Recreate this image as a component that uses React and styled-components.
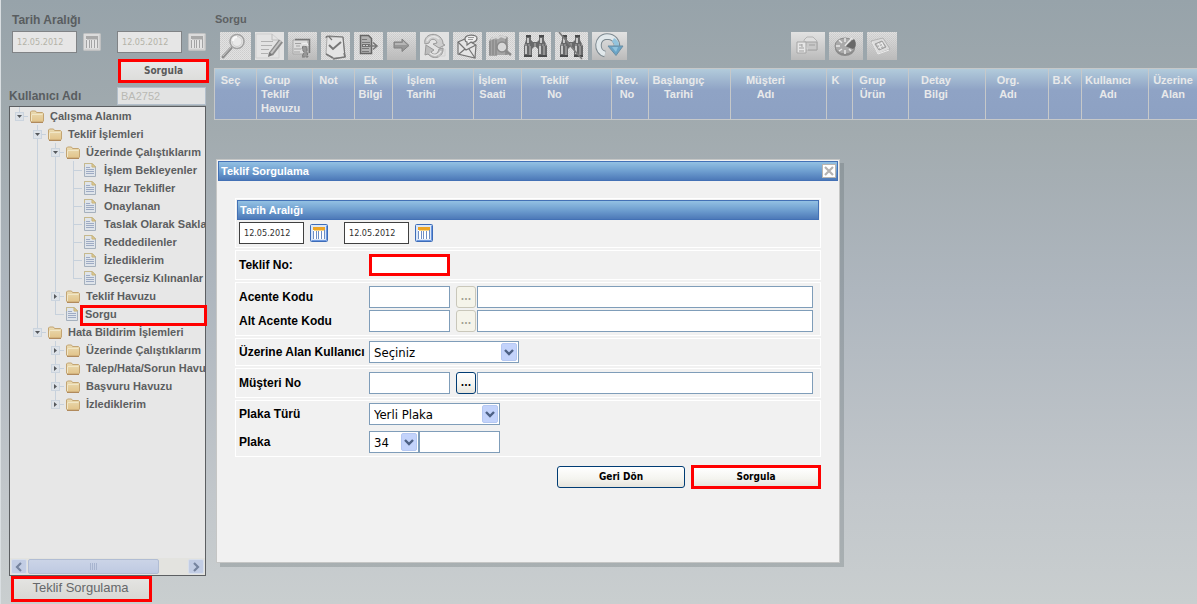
import { Fragment, useState } from 'react';
import styled, { createGlobalStyle, css } from 'styled-components';

const GlobalStyle = createGlobalStyle`
  * {
    box-sizing: border-box;
  }

  body {
    margin: 0;
    font-family: 'Liberation Sans', Arial, sans-serif;
    font-size: 11px;
    color: #5e6062;
  }

  button,
  input,
  select {
    margin: 0;
    font-family: 'DejaVu Sans Condensed', 'DejaVu Sans', Tahoma, sans-serif;
  }
`;

const Page = styled.div`
  display: flex;
  min-height: 100vh;
  position: relative;
  overflow: hidden;
  border-left: 1px solid #d9dee1;
  background: linear-gradient(
    #97a3aa 0%,
    #a2abaf 22%,
    #aeb6be 48%,
    #c2c7cb 82%,
    #c9cecf 100%
  );
`;

const Sidebar = styled.aside`
  display: flex;
  flex-direction: column;
  flex: none;
  width: 213px;
  padding: 11px 8px 2px 8px;
`;

const Main = styled.main`
  flex: 1;
  min-width: 0;
  padding-top: 10px;
`;

const SideLabel = styled.label`
  font-size: 12px;
  line-height: 18px;
  font-weight: bold;
  color: #595d60;
`;

const SideTitle = styled.div`
  padding-left: 3px;
  margin-bottom: 2px;
  font-size: 12px;
  line-height: 18px;
  font-weight: bold;
  color: #595d60;
`;

const DateRow = styled.div`
  display: flex;
  align-items: center;
  padding-left: ${(p) => (p.$dim ? '3px' : '2px')};
`;

const DateInput = styled.input`
  width: 65px;
  height: 22px;
  padding: 0 4px;
  border: 1px solid ${(p) => (p.$dim ? '#808386' : '#404040')};
  border-radius: 0;
  background: ${(p) => (p.$dim ? '#e6e6e6' : '#fff')};
  color: ${(p) => (p.$dim ? '#b4b3a8' : '#303030')};
  font-size: 9px;
`;

const IconButton = styled.button`
  display: flex;
  padding: 0;
  border: 0;
  background: none;
  cursor: pointer;
  margin: 0 ${(p) => (p.$gap ? '16px' : '0')} 0 6px;
`;

const marked = css`
  border: 3px solid #f00;
  border-radius: 0;
`;

const Button = styled.button`
  width: ${(p) => p.$width}px;
  height: 22px;
  padding: 0 0 1px;
  border: 1px solid #003c74;
  border-radius: 3px;
  background: linear-gradient(#fff, #f4f4ef 60%, #e6e4dc);
  color: #000;
  font-size: 10px;
  font-weight: bold;
  cursor: pointer;
  ${(p) => p.$marked && marked}
  ${(p) => p.$marked && 'height: 24px;'}

  &:disabled {
    border-color: #c9c7ba;
    background: #f5f4ea;
    color: #a1a192;
    cursor: default;
  }
`;

const SideButton = styled(Button)`
  align-self: flex-end;
  margin: 6px -3px 4px 0;
  background: linear-gradient(#e8e8e8, #dddddb);
  color: #5a5a5a;
`;

const UserRow = styled.div`
  display: flex;
  align-items: center;
  justify-content: space-between;
  margin-bottom: 1px;
`;

const UserInput = styled.input`
  width: 89px;
  height: 18px;
  padding: 0 3px;
  border: 1px solid #b3bfcb;
  background: #e2e3e3;
  color: #b9b9b4;
  font-family: 'Liberation Sans', Arial, sans-serif;
  font-size: 11px;
`;

const Tree = styled.div`
  display: flex;
  flex-direction: column;
  flex: 1;
  border: 1px solid #5c5f62;
  background: #e7e7e7;
`;

const TreeRows = styled.ul`
  flex: 1;
  margin: 0;
  padding: 0;
  list-style: none;
`;

const TreeRow = styled.li`
  display: flex;
  height: 18px;
`;

const TreeIcon = styled.span`
  display: flex;
  flex: none;
  align-items: center;
  justify-content: center;
  width: ${(p) => (p.$leaf ? '16px' : '18px')};
`;

const TreeLink = styled.a`
  flex: 1;
  min-width: 0;
  padding-left: ${(p) => (p.$leaf ? '6px' : '4px')};
  overflow: hidden;
  white-space: nowrap;
  line-height: 18px;
  font-size: 11px;
  font-weight: bold;
  color: #5c5e60;
  text-decoration: none;
  ${(p) =>
    p.$marked &&
    css`
      height: 21px;
      margin-right: -2px;
      padding-left: 2px;
      border: 3px solid #f00;
      line-height: 12px;
      background: #e7e7e7;
      z-index: 1;
    `}
`;

const ScrollBar = styled.div`
  display: flex;
  height: 17px;
  padding: 1px;
  background: #e3e3df;
`;

const ScrollButton = styled.button`
  display: flex;
  align-items: center;
  justify-content: center;
  width: 16px;
  padding: 0;
  border: 1px solid #d8dfeb;
  border-radius: 2px;
  background: #c2cde4;
`;

const ScrollThumb = styled.div`
  display: flex;
  align-items: center;
  justify-content: center;
  width: 68%;
  margin: 0 auto 0 1px;
  border: 1px solid #b1bdd4;
  border-radius: 2px;
  background: linear-gradient(#cbd4e7, #bfcae2);
`;

const TaskButton = styled.button`
  ${marked}
  align-self: flex-start;
  width: 141px;
  height: 26px;
  margin-left: 2px;
  padding: 0 2px 3px 0;
  background: linear-gradient(#e4e4e2, #d8d8d4);
  color: #66686a;
  font-family: 'Liberation Sans', Arial, sans-serif;
  font-size: 13px;
`;

const PageTitle = styled.h1`
  margin: 0 0 4px;
  padding-left: 1px;
  font-size: 11px;
  line-height: 18px;
  color: #5e6163;
`;

const Toolbar = styled.div`
  display: flex;
  gap: 4px;
  height: 28px;
  padding-left: 6px;
  margin-bottom: 8px;
`;

const Tool = styled.button`
  display: block;
  flex: none;
  padding: 0;
  border: 0;
  background: none;
  cursor: pointer;

  svg {
    display: block;
  }
`;

const ToolSpace = styled.span`
  width: 156px;
`;

const Grid = styled.table`
  width: 100%;
  table-layout: fixed;
  border: 1px solid #c6c8c9;
  border-right: 0;
  border-spacing: 0;
  background: linear-gradient(#b2cbdb, #8fa3c5 42%, #8da1c3);
`;

const GridHead = styled.th`
  width: ${(p) => (p.$width ? `${p.$width}px` : 'auto')};
  height: 50px;
  padding: 4px ${(p) => p.$pad}px 0 ${(p) => (p.$left ? '4px' : '0')};
  border-right: 1px solid #c6c8c9;
  text-align: ${(p) => (p.$left ? 'left' : 'center')};
  vertical-align: top;
  white-space: pre;
  font-size: 11px;
  line-height: 14px;
  color: #e8e9ea;

  &:last-child {
    border-right: 0;
  }
`;

const Dialog = styled.section`
  position: absolute;
  top: 159px;
  left: 215px;
  width: 624px;
  padding: 1px 1px 73px;
  border: 1px solid #c5c6c5;
  background: #f1f1f1;
  box-shadow: 4px 4px 0 rgba(80, 90, 95, 0.25);
`;

const bar = css`
  display: flex;
  align-items: center;
  height: 20px;
  margin: 0;
  padding-left: 2px;
  border: 1px solid #4371b5;
  background: linear-gradient(#93c1e3, #6f9fd0 50%, #4d79b8);
  font-size: 11px;
  font-weight: bold;
  color: #fff;
`;

const DialogTitle = styled.header`
  ${bar}
  justify-content: space-between;
  padding-right: 1px;
`;

const CloseButton = styled.button`
  display: flex;
  padding: 0;
  border: 1px solid #b9b5b0;
  background: #fff;
`;

const Form = styled.form`
  display: flex;
  flex-direction: column;
  gap: 2px;
  padding: 17px 17px 0;
`;

const Group = styled.div`
  display: flex;
  flex-direction: column;
  gap: ${(p) => p.$gap || 2}px;
  padding: ${(p) => p.$pad || '3px'};
  border: 1px solid #fff;
`;

const GroupTitle = styled.h2`
  ${bar}
`;

const Field = styled.div`
  display: flex;
  align-items: center;
  height: 22px;
`;

const FieldLabel = styled.label`
  flex: none;
  width: 130px;
  padding-bottom: 1px;
  line-height: 18px;
  white-space: nowrap;
  font-size: 12px;
  font-weight: bold;
  color: #000;
`;

const TextInput = styled.input`
  width: ${(p) => (p.$wide ? '336px' : '81px')};
  height: 22px;
  padding: 0 4px;
  border: 1px solid #7f9db9;
  border-radius: 0;
  background: #fff;
  font-size: 13px;
  ${(p) => p.$marked && marked}
`;

const LookupButton = styled(Button)`
  margin: 0 1px 0 6px;
`;

const SelectBox = styled.span`
  position: relative;
  display: flex;
  width: ${(p) => p.$width}px;
  height: 22px;

  svg {
    position: absolute;
    top: 2px;
    right: 2px;
    pointer-events: none;
  }
`;

const Select = styled.select`
  appearance: none;
  width: 100%;
  padding: 0 4px;
  border: 1px solid #7f9db9;
  border-radius: 0;
  background: #fff;
  color: #000;
  font-size: 13px;
`;

const Actions = styled.div`
  display: flex;
  align-items: center;
  justify-content: flex-end;
  gap: 6px;
  padding-top: 6px;
`;

const CalendarIcon = ({ dim }) => {
  const c = dim
    ? { edge: '#bfc0c1', fill: '#dcdcdc', head: '#a9a9a9', line: '#a3a4a5' }
    : { edge: '#3d6cb8', fill: '#dbe7f8', head: '#eda525', line: '#6f8fc4' };
  return (
    <svg width="18" height="18" viewBox="0 0 18 18">
      <rect x=".5" y=".5" width="17" height="17" rx="1" fill={c.fill} stroke={c.edge} />
      <path d="M1.5 16.5h15v-15" fill="none" stroke={dim ? '#cfcfcf' : '#6f9ae0'} />
      <rect x="3" y="3" width="12" height="12" fill={dim ? '#e4e4e4' : '#fff'} />
      <rect x="3" y="3" width="12" height="3" fill={c.head} />
      <path d="M3.5 7v8M6.5 7v8M8.5 7v8M11.5 7v8M14.5 6v9" stroke={c.line} />
      <path d="M4 6.5h10" stroke={dim ? '#c9c9c9' : '#f7d48a'} />
    </svg>
  );
};

const FolderIcon = () => (
  <svg width="14" height="13" viewBox="0 0 14 13">
    <defs>
      <linearGradient id="folder" x1="0" y1="0" x2="0" y2="1">
        <stop offset="0" stopColor="#eadcb4" />
        <stop offset="1" stopColor="#e2c389" />
      </linearGradient>
    </defs>
    <path d="M.5 11V2l1-1h4l1 1.500h6l1 1V11l-1 1h-11z" fill="url(#folder)" stroke="#c3a472" />
    <path d="M1.500 4.500h11M1.500 5v6" stroke="#f1e6c6" fill="none" />
    <path d="M1 12.500h12" stroke="#b18a5c" />
  </svg>
);

const PageIcon = () => (
  <svg width="12" height="14" viewBox="0 0 12 14">
    <path d="M.5.5H8l3.500 3.500v9.500H.5z" fill="#dfe4ea" stroke="#a5b0bd" />
    <path d="M.5 4V.5H8L11.500 4" fill="none" stroke="#c7b98c" />
    <path d="M8 .5V4h3.500z" fill="#e3d29a" stroke="#c7b176" />
    <path d="M2 4.500h4M2 6.500h8M2 8.500h8M2 10.500h8" stroke="#9eabc4" />
  </svg>
);

// One 18px cell of the tree's guide lines; the last cell may hold a toggle.
const Guide = ({ up, down, across, toggle }) => (
  <svg width="18" height="18" viewBox="0 0 18 18" style={{ flex: 'none' }}>
    <path
      d={`${up ? 'M9.500 0V9.500' : ''}${down ? 'M9.500 9V18' : ''}${across ? 'M9 9.500H18' : ''}`}
      stroke="#c7d1dc"
      fill="none"
    />
    {toggle && <rect x="5.500" y="5.500" width="8" height="8" fill="#dde2e8" stroke="#cbd4de" />}
    {toggle === 'open' && <path d="M7 8h5L9.500 11z" fill="#55585c" />}
    {toggle === 'closed' && <path d="M8 7v5l3-2.500z" fill="#55585c" />}
  </svg>
);

const ChevronBox = () => (
  <svg width="16" height="18" viewBox="0 0 16 18">
    <rect x=".5" y=".5" width="15" height="17" rx="1.500" fill="#c3d3fb" stroke="#b5c8f2" />
    <path d="M4 7l4 4 4-4" fill="none" stroke="#4d6185" strokeWidth="2.400" />
  </svg>
);

const Arrow = ({ d }) => (
  <svg width="8" height="10" viewBox="0 0 8 10">
    <path d={d} fill="none" stroke="#76849f" strokeWidth="2.200" />
  </svg>
);

const Binoculars = () => (
  <g>
    <path
      d="M7 4h5v4l2 2h4l2-2V4h5v4l3 6v10h-9v-7l-2-2h-2l-2 2v7H5V14l2-6z"
      fill="#68696a"
    />
    <path d="M7 4h5M20 4h5M5 24h8M19 24h9" stroke="#4a4b4c" strokeWidth="2" />
    <path d="M7 14v8M9 6v5M21 14v8M22 6v5" stroke="#c9c9c9" strokeWidth="2" />
    <path d="M11 14v9M25 14v9M16 11v4" stroke="#929292" strokeWidth="2" />
    <path d="M6 13h6M20 13h7" stroke="#a9a9a9" strokeDasharray="2 1" />
  </g>
);

const TOOLS = [
  {
    name: 'Ara',
    width: 31,
    art: (
      <g fill="none">
        <path d="M11 16L3 25" stroke="#8f8f8f" strokeWidth="3" strokeLinecap="round" />
        <path d="M11 15L3 24" stroke="#c5c5c5" />
        <circle cx="17" cy="9.500" r="7" fill="#e9e9e9" stroke="#a2a2a2" strokeWidth="1.600" />
        <circle cx="17" cy="9.500" r="5" stroke="#cecece" />
        <path d="M13 9c0-3 2-4 4-4" stroke="#fafafa" strokeWidth="2" />
      </g>
    ),
  },
  {
    name: 'Düzenle',
    width: 29,
    plain: true,
    art: (
      <g fill="none">
        <path d="M1 2h16l7 6v18H1z" fill="#e3e3e3" stroke="#cfcfcf" />
        <path d="M17 2v6h7" stroke="#bcbcbc" />
        <path d="M6 9.500h12M6 13.500h11M6 17.500h8M6 21.500h7" stroke="#b1b1b1" />
        <path d="M26 9L16 22" stroke="#8b8b8b" strokeWidth="5" />
        <path d="M26 8.500L16 21.500" stroke="#c4c4c4" strokeWidth="2" />
        <path d="M14 20l4 3-5 2z" fill="#777" />
      </g>
    ),
  },
  {
    name: 'Belge seç',
    width: 29,
    shade: true,
    art: (
      <g fill="none">
        <path d="M5 8h15v14H5z" fill="#dcdcdc" stroke="#a7a7a7" />
        <path d="M7 7.500h14.500V21" stroke="#767676" strokeWidth="1.500" />
        <path d="M7 11.500h6M8 14h4M6 17h7M6 20h6" stroke="#a1a1a1" />
        <path d="M15 14l-1 3 2 3-2 5h6l-1-5v-5z" fill="#979797" stroke="#777" strokeDasharray="3 1" />
        <path d="M14 12l5-1 1 3" stroke="#f2f2f2" />
      </g>
    ),
  },
  {
    name: 'Onayla',
    width: 29,
    art: (
      <g fill="none">
        <path d="M6 5l16 0 2 20-11 1-8-4z" fill="#e4e4e4" stroke="#a9a9a9" />
        <path d="M5 6c0-2 3-3 4 0l2 2M8 4l14 1M22 5l2 20" stroke="#757575" strokeWidth="1.200" />
        <path d="M12 27l12-2-1-4M5 22l7 4" stroke="#777" strokeWidth="1.500" />
        <path d="M8 13l4 4 8-7" stroke="#777" strokeWidth="2" />
      </g>
    ),
  },
  {
    name: 'Aktar',
    width: 29,
    art: (
      <g fill="none">
        <path d="M6.500 3.500h8l3 3v15h-11z" fill="#b3b3b3" stroke="#666" strokeWidth="1.500" />
        <path d="M8 7.500h5M8 10.500h8M8 16.500h7M8 19.500h7" stroke="#787878" />
        <path d="M8 12h8v3H8z" fill="#707070" />
        <path d="M9 13.500h7" stroke="#d0d0d0" strokeDasharray="2 1" />
        <path d="M15 14h7M19 10.500l4 3.500-4 3.500" stroke="#777" strokeWidth="1.600" />
      </g>
    ),
  },
  {
    name: 'İlerle',
    width: 29,
    shade: true,
    art: (
      <g>
        <path d="M7 10h8V7l7 6.500-7 6V16H7z" fill="#979797" stroke="#808080" />
        <path d="M8 11h8V9l4 4H8z" fill="#b6b6b6" />
      </g>
    ),
  },
  {
    name: 'Yenile',
    width: 29,
    plain: true,
    art: (
      <g fill="none">
        <path
          d="M5 12C3 4 13-1 20 5c2 2 3 4 3 7l2 1-6 3-6-4 4-1c-1-5-7-5-8 0z"
          fill="#cdcdcd"
          stroke="#999"
        />
        <path
          d="M23 16c1 9-9 13-15 6l-3 1 1-10 8 5-3 2c3 4 7 2 8-3z"
          fill="#bdbdbd"
          stroke="#999"
        />
        <path d="M7 9c3-6 9-5 12-2M10 21c4 4 9 2 11-2" stroke="#e6e6e6" strokeWidth="1.500" />
        <path d="M18 24h7v-7" stroke="#d0d0d0" />
      </g>
    ),
  },
  {
    name: 'Mesaj',
    width: 29,
    art: (
      <g fill="none" stroke="#747474" strokeWidth="1.200">
        <path d="M5 10l7-3 11 6-1 13-17-4z" fill="#e5e5e5" />
        <path d="M5 10l8 8 10-5M6 22l6-5M22 26l-6-9" />
        <path d="M12 7c0-5 12-5 12-1s-5 5-6 4l-4 3v-3c-1 0-2-1-2-3z" fill="#eee" />
        <path d="M15 5.500h6M15 7.500h5" stroke="#999" />
      </g>
    ),
  },
  {
    name: 'Arşivde ara',
    width: 29,
    art: (
      <g fill="none">
        <path d="M3 9l3-4 5 1v18H3zM11 7l3-4 8 2v18H11z" fill="#a4a4a4" />
        <path d="M4 9v14M7 7v16M10 8v15M20 6v17" stroke="#7f7f7f" />
        <path d="M5 7l5-2 2 1 3-2 5 2" stroke="#d5d5d5" strokeWidth="2" />
        <circle cx="16" cy="15" r="5" fill="#d8d8d8" stroke="#8a8a8a" strokeWidth="1.500" />
        <path d="M20 19l5 4" stroke="#888" strokeWidth="2.500" />
      </g>
    ),
  },
  { name: 'Bul', width: 32, art: <Binoculars /> },
  {
    name: 'Bulmayı kapat',
    width: 33,
    art: (
      <g>
        <Binoculars />
        <path d="M4 0l10 12 5 6 8 9" stroke="#7b7b7b" strokeWidth="1.600" fill="none" />
      </g>
    ),
  },
  {
    name: 'Güncelle',
    width: 35,
    plain: true,
    shade: true,
    art: (
      <g fill="none">
        <path
          d="M13 22C4 20 4 5 15 4.500c7 0 10 5 10 10"
          stroke="#7d8990"
          strokeWidth="6.500"
        />
        <path
          d="M13 22C4 20 4 5 15 4.500c7 0 10 5 10 10"
          stroke="#e1e8eb"
          strokeWidth="4.500"
        />
        <path d="M21 8c2 1 4 4 4 7" stroke="#93c3dc" strokeWidth="4.500" />
        <path d="M16 14h15l-7 9.500z" fill="#6aa4c6" stroke="#6b8ea3" />
        <path d="M20 15h6l-2 5z" fill="#8fc2dd" />
      </g>
    ),
  },
];

const RIGHT_TOOLS = [
  {
    name: 'Belgeler',
    width: 34,
    plain: true,
    shade: true,
    art: (
      <g>
        <path d="M13 8l3-3h6l4 4v9H14z" fill="#dedede" stroke="#b4b4b4" />
        <path d="M14 10h12v8H17" fill="#c8c8c8" stroke="#a1a1a1" />
        <path d="M6 10h9v11H6z" fill="#e6e6e6" stroke="#a5a5a5" />
        <path d="M8 13h3M8 16h5M8 19h5M11 12v3M18 13h6" stroke="#9f9f9f" />
      </g>
    ),
  },
  {
    name: 'Zaman',
    width: 34,
    shade: true,
    art: (
      <g>
        <ellipse cx="16" cy="16.500" rx="10" ry="7.500" fill="#8b8b8b" />
        <ellipse cx="16" cy="14" rx="10" ry="8" fill="#aaa" stroke="#8a8a8a" />
        <path d="M16 14L25 7c3 4 2 8-1 10z" fill="#686868" />
        <path d="M16 6v4M7 14h4M10 8l3 3M10 19l3-2M16 22v-4M22 19l-2-2" stroke="#e8e8e8" strokeWidth="1.500" />
        <path d="M16 14l7-8" stroke="#e6e6e6" strokeWidth="1.500" />
      </g>
    ),
  },
  {
    name: 'Notlar',
    width: 30,
    shade: true,
    art: (
      <g fill="none">
        <path d="M4 9l12-3 7 11-12 5z" fill="#dcdcdc" stroke="#b4b4b4" />
        <path d="M5 10l6 12 11-4" stroke="#efefef" />
        <path d="M8 12l7-3 4 6-7 3z" fill="#b9b9b9" stroke="#9d9d9d" />
        <path d="M10 13l6-2M11 16l6-3M11 11l3 6M14 10l3 5" stroke="#eee" />
      </g>
    ),
  },
];

const ToolIcon = ({ width, plain, shade, children }) => (
  <svg width={width} height="28" viewBox={`0 0 ${width} 28`}>
    <defs>
      <pattern id="dots" width="2" height="2" patternUnits="userSpaceOnUse">
        <rect width="1" height="1" fill="#cdcdcd" />
        <rect x="1" y="1" width="1" height="1" fill="#d3d3d3" />
      </pattern>
      <linearGradient id="shade" x1="0" y1="0" x2="0" y2="1">
        <stop offset="0" stopColor="#bdbdbd" stopOpacity="0" />
        <stop offset="1" stopColor="#bababa" />
      </linearGradient>
    </defs>
    <rect width={width} height="28" fill="#e2e2e2" />
    {!plain && <rect width={width} height="28" fill="url(#dots)" />}
    {shade && <rect width={width} height="28" fill="url(#shade)" />}
    {children}
  </svg>
);

// guides: for every cell before the icon, which strokes it draws
const line = { up: true, down: true };
const none = {};
const leaf = { up: true, down: true, across: true };
const lastLeaf = { up: true, across: true };
const open = { up: true, down: true, across: true, toggle: 'open' };
const closed = { up: true, down: true, across: true, toggle: 'closed' };

const TREE = [
  { text: 'Çalışma Alanım', folder: true, guides: [{ up: true, across: true, toggle: 'open' }] },
  { text: 'Teklif İşlemleri', folder: true, guides: [none, open] },
  { text: 'Üzerinde Çalıştıklarım', folder: true, guides: [none, line, open] },
  { text: 'İşlem Bekleyenler', guides: [none, line, line, leaf] },
  { text: 'Hazır Teklifler', guides: [none, line, line, leaf] },
  { text: 'Onaylanan', guides: [none, line, line, leaf] },
  { text: 'Taslak Olarak Saklananlar', guides: [none, line, line, leaf] },
  { text: 'Reddedilenler', guides: [none, line, line, leaf] },
  { text: 'İzlediklerim', guides: [none, line, line, leaf] },
  { text: 'Geçersiz Kılınanlar', guides: [none, line, line, lastLeaf] },
  { text: 'Teklif Havuzu', folder: true, guides: [none, line, closed] },
  { text: 'Sorgu', marked: true, guides: [none, line, lastLeaf] },
  {
    text: 'Hata Bildirim İşlemleri',
    folder: true,
    guides: [none, { up: true, across: true, toggle: 'open' }],
  },
  { text: 'Üzerinde Çalıştıklarım', folder: true, guides: [none, none, closed] },
  { text: 'Talep/Hata/Sorun Havuzu', folder: true, guides: [none, none, closed] },
  { text: 'Başvuru Havuzu', folder: true, guides: [none, none, closed] },
  {
    text: 'İzlediklerim',
    folder: true,
    guides: [none, none, { up: true, across: true, toggle: 'closed' }],
  },
];

const COLUMNS = [
  { text: 'Seç', width: 42, pad: 10 },
  { text: ' Grup\nTeklif\nHavuzu', width: 56, pad: 0, left: true },
  { text: 'Not', width: 42, pad: 10 },
  { text: 'Ek\nBilgi', width: 38, pad: 6 },
  { text: 'İşlem\nTarihi', width: 81, pad: 24 },
  { text: 'İşlem\nSaati', width: 48, pad: 10 },
  { text: 'Teklif\nNo', width: 90, pad: 24 },
  { text: 'Rev.\nNo', width: 37, pad: 6 },
  { text: 'Başlangıç\nTarihi', width: 82, pad: 22 },
  { text: 'Müşteri\nAdı', width: 96, pad: 26 },
  { text: 'K', width: 26, pad: 8 },
  { text: 'Grup\nÜrün', width: 56, pad: 16 },
  { text: 'Detay\nBilgi', width: 77, pad: 22 },
  { text: 'Org.\nAdı', width: 63, pad: 18 },
  { text: 'B.K', width: 33, pad: 6 },
  { text: 'Kullanıcı\nAdı', width: 67, pad: 14 },
  { text: 'Üzerine\nAlan', pad: 0 },
];

const DateRange = ({ dim, range, onChange }) => (
  <DateRow $dim={dim}>
    {range.map((value, i) => (
      <Fragment key={i}>
        <DateInput
          $dim={dim}
          aria-label={i ? 'Bitiş tarihi' : 'Başlangıç tarihi'}
          value={value}
          onChange={(e) => onChange(range.map((v, j) => (i === j ? e.target.value : v)))}
        />
        <IconButton type="button" aria-label="Takvim" $gap={i === 0}>
          <CalendarIcon dim={dim} />
        </IconButton>
      </Fragment>
    ))}
  </DateRow>
);

const SelectField = ({ id, width, options }) => (
  <SelectBox $width={width}>
    <Select id={id}>
      {options.map((option) => (
        <option key={option}>{option}</option>
      ))}
    </Select>
    <ChevronBox />
  </SelectBox>
);

const LookupField = ({ id, label, disabled }) => (
  <Field>
    <FieldLabel htmlFor={id}>{label}</FieldLabel>
    <TextInput id={id} />
    <LookupButton type="button" $width={20} disabled={disabled}>
      ...
    </LookupButton>
    <TextInput $wide aria-label={`${label} açıklaması`} />
  </Field>
);

const NavTree = () => (
  <Tree>
    <TreeRows>
      {TREE.map((node, i) => (
        <TreeRow key={i}>
          {node.guides.map((guide, j) => (
            <Guide key={j} {...guide} />
          ))}
          <TreeIcon $leaf={!node.folder}>{node.folder ? <FolderIcon /> : <PageIcon />}</TreeIcon>
          <TreeLink href="#" $leaf={!node.folder} $marked={node.marked}>
            {node.text}
          </TreeLink>
        </TreeRow>
      ))}
    </TreeRows>
    <ScrollBar>
      <ScrollButton aria-label="Sola kaydır">
        <Arrow d="M6 1L2 5l4 4" />
      </ScrollButton>
      <ScrollThumb>
        <svg width="8" height="7" viewBox="0 0 8 7">
          <path d="M.5 0v7M2.500 0v7M4.500 0v7M6.500 0v7" stroke="#a7b4cf" />
        </svg>
      </ScrollThumb>
      <ScrollButton aria-label="Sağa kaydır">
        <Arrow d="M2 1l4 4-4 4" />
      </ScrollButton>
    </ScrollBar>
  </Tree>
);

const QueryDialog = ({ onClose }) => {
  const [range, setRange] = useState(['12.05.2012', '12.05.2012']);

  return (
    <Dialog role="dialog" aria-labelledby="dialog-title">
      <DialogTitle>
        <span id="dialog-title">Teklif Sorgulama</span>
        <CloseButton aria-label="Kapat" onClick={onClose}>
          <svg width="12" height="12" viewBox="0 0 12 12">
            <path d="M2 2l8 8M10 2l-8 8" stroke="#b5b3b2" strokeWidth="2.200" />
          </svg>
        </CloseButton>
      </DialogTitle>
      <Form onSubmit={(e) => e.preventDefault()}>
        <Group $pad="1px 1px 3px">
          <GroupTitle>Tarih Aralığı</GroupTitle>
          <DateRange range={range} onChange={setRange} />
        </Group>
        <Group>
          <Field>
            <FieldLabel htmlFor="teklif-no">Teklif No:</FieldLabel>
            <TextInput id="teklif-no" $marked />
          </Field>
        </Group>
        <Group>
          <LookupField id="acente" label="Acente Kodu" disabled />
          <LookupField id="alt-acente" label="Alt Acente Kodu" disabled />
        </Group>
        <Group $pad="2px 3px">
          <Field>
            <FieldLabel htmlFor="kullanici">Üzerine Alan Kullanıcı</FieldLabel>
            <SelectField id="kullanici" width={150} options={['Seçiniz']} />
          </Field>
        </Group>
        <Group>
          <LookupField id="musteri" label="Müşteri No" />
        </Group>
        <Group $pad="2px 3px 3px" $gap={6}>
          <Field>
            <FieldLabel htmlFor="plaka-turu">Plaka Türü</FieldLabel>
            <SelectField id="plaka-turu" width={131} options={['Yerli Plaka', 'Yabancı Plaka']} />
          </Field>
          <Field>
            <FieldLabel htmlFor="plaka">Plaka</FieldLabel>
            <SelectField id="plaka" width={50} options={['34', '35', '06']} />
            <TextInput aria-label="Plaka numarası" />
          </Field>
        </Group>
        <Actions>
          <Button type="button" $width={128} onClick={onClose}>
            Geri Dön
          </Button>
          <Button type="submit" $width={130} $marked>
            Sorgula
          </Button>
        </Actions>
      </Form>
    </Dialog>
  );
};

const App = () => {
  const [range, setRange] = useState(['12.05.2012', '12.05.2012']);
  const [dialogOpen, setDialogOpen] = useState(true);

  return (
    <>
      <GlobalStyle />
      <Page>
        <Sidebar>
          <SideTitle>Tarih Aralığı</SideTitle>
          <DateRange dim range={range} onChange={setRange} />
          <SideButton $width={91} $marked onClick={() => setDialogOpen(true)}>
            Sorgula
          </SideButton>
          <UserRow>
            <SideLabel htmlFor="user">Kullanıcı Adı</SideLabel>
            <UserInput id="user" defaultValue="BA2752" />
          </UserRow>
          <NavTree />
          <TaskButton>Teklif Sorgulama</TaskButton>
        </Sidebar>
        <Main>
          <PageTitle>Sorgu</PageTitle>
          <Toolbar>
            {TOOLS.map((tool) => (
              <Tool key={tool.name} aria-label={tool.name}>
                <ToolIcon {...tool}>{tool.art}</ToolIcon>
              </Tool>
            ))}
            <ToolSpace />
            {RIGHT_TOOLS.map((tool) => (
              <Tool key={tool.name} aria-label={tool.name}>
                <ToolIcon {...tool}>{tool.art}</ToolIcon>
              </Tool>
            ))}
          </Toolbar>
          <Grid>
            <thead>
              <tr>
                {COLUMNS.map((column, i) => (
                  <GridHead key={i} $width={column.width} $pad={column.pad} $left={column.left}>
                    {column.text}
                  </GridHead>
                ))}
              </tr>
            </thead>
          </Grid>
        </Main>
        {dialogOpen && <QueryDialog onClose={() => setDialogOpen(false)} />}
      </Page>
    </>
  );
};

export default App;
